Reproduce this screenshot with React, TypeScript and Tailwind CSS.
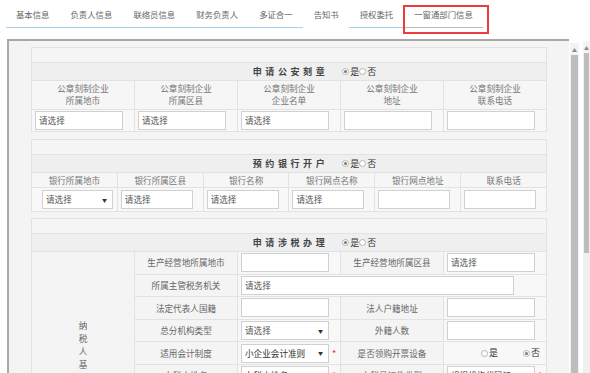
import React from "react";

const tabs = [
  { label: "基本信息", line: "border-[#a9d2f1]" },
  { label: "负责人信息", line: "border-[#a9d2f1]" },
  { label: "联络员信息", line: "border-[#a9d2f1]" },
  { label: "财务负责人", line: "border-[#a9d2f1]" },
  { label: "多证合一", line: "border-[#a9d2f1]" },
  { label: "告知书", line: "border-transparent" },
  { label: "授权委托", line: "border-[#a9d2f1]" },
  { label: "一窗通部门信息", line: "border-[#b9b9b9]" },
];

const cell = "border border-[#e2e2e2]";

function Radio({ on }: { on?: boolean }) {
  return (
    <span className="inline-flex items-center justify-center w-[7px] h-[7px] rounded-full border border-[#b4b4b4] bg-white mr-[1px]">
      {on && <span className="w-[3px] h-[3px] rounded-full bg-[#777]" />}
    </span>
  );
}

function YesNo() {
  return (
    <span className="flex items-center text-[9px] text-[#333] font-normal">
      <Radio on />是<Radio />否
    </span>
  );
}

function Star() {
  return <span className="ml-[3px] text-[9px] leading-none text-[#f22]">*</span>;
}

function Box({ text, w = "w-[88px]", select, dark }: { text?: string; w?: string; select?: boolean; dark?: boolean }) {
  return (
    <div
      className={`${w} h-[19px] bg-white border border-[#d0d0d0] flex items-center pl-[3px] pr-[5px] text-[8.6px] ${
        dark ? "text-[#333]" : "text-[#555]"
      }`}
    >
      <span className="flex-1 truncate">{text}</span>
      {select && <span className="text-[5px] text-[#333]">▼</span>}
    </div>
  );
}

function TitleRows({ cols, title }: { cols: number; title: string }) {
  return (
    <>
      <tr>
        <td colSpan={cols} className={`${cell} h-[15px] bg-[#f5f5f5]`} />
      </tr>
      <tr>
        <td colSpan={cols} className={`${cell} h-[18px] bg-[#efefef]`}>
          <div className="grid grid-cols-[1fr_auto_1fr] items-center">
            <span />
            <span className="font-bold text-[#444] tracking-[3.6px] text-[9px] pl-[3px]">{title}</span>
            <span className="pl-[14px]">
              <YesNo />
            </span>
          </div>
        </td>
      </tr>
    </>
  );
}

function Label({ children }: { children: React.ReactNode }) {
  return <td className={`${cell} h-[22.6px] text-center text-[#666] bg-[#f4f4f4]`}>{children}</td>;
}

function Val({ children, span }: { children?: React.ReactNode; span?: number }) {
  return (
    <td colSpan={span} className={`${cell} px-[3px] bg-[#f8f8f8]`}>
      {children}
    </td>
  );
}

const sealHeads = [
  ["公章刻制企业", "所属地市"],
  ["公章刻制企业", "所属区县"],
  ["公章刻制企业", "企业名单"],
  ["公章刻制企业", "地址"],
  ["公章刻制企业", "联系电话"],
];
const sealVals = ["请选择", "请选择", "请选择", "", ""];

const bankHeads = ["银行所属地市", "银行所属区县", "银行名称", "银行网点名称", "银行网点地址", "联系电话"];

function Scrollbar({ thumbEnd }: { thumbEnd?: string }) {
  return (
    <div className="flex flex-col h-full bg-[#f0f0f0]">
      <div className="h-[12px] flex items-center justify-center bg-[#f3f3f3]">
        <span className="text-[5px] text-[#8a8a8a] leading-none">▲</span>
      </div>
      <div className={`mx-[1px] bg-[#bdbdbd] ${thumbEnd ?? "flex-1"}`} />
    </div>
  );
}

export default function App() {
  return (
    <div className="relative w-[590px] h-[373px] overflow-hidden bg-white font-['Microsoft_YaHei','Noto_Sans_CJK_SC',sans-serif] text-[8.6px] text-[#666]">
      <div className="flex h-full">
        <div className="w-[583px] flex flex-col">
          {/* tabs */}
          <nav className="flex pl-[5.5px] h-[28px] shrink-0">
            {tabs.map((t) => (
              <div key={t.label} className={`px-[10.5px] h-[28px] pt-[2px] flex items-center border-b ${t.line} text-[8.4px] text-[#666]`}>
                {t.label}
              </div>
            ))}
          </nav>

          {/* frame */}
          <div className="mt-[11px] ml-[7px] mr-[4px] flex flex-1 min-h-0 border-l-2 border-[#a8a8a8]">
            <div className="flex-1 border-t-2 border-[#a8a8a8] bg-[#f4f4f4] pl-[22px] pt-[6px] overflow-hidden">
              {/* 公安刻章 */}
              <table className="w-[516px] table-fixed border-collapse">
                <tbody>
                  <TitleRows cols={5} title="申请公安刻章" />
                  <tr>
                    {sealHeads.map((h, i) => (
                      <td key={i} className={`${cell} h-[29px] text-center leading-[11.7px] text-[#777] bg-[#f6f6f6]`}>
                        {h[0]}
                        <br />
                        {h[1]}
                      </td>
                    ))}
                  </tr>
                  <tr>
                    {sealVals.map((v, i) => (
                      <td key={i} className={`${cell} h-[22px] px-[3px] bg-[#f8f8f8]`}>
                        <Box text={v} />
                      </td>
                    ))}
                  </tr>
                </tbody>
              </table>

              {/* 银行开户 */}
              <table className="mt-[7px] w-[516px] table-fixed border-collapse">
                <tbody>
                  <TitleRows cols={6} title="预约银行开户" />
                  <tr>
                    {bankHeads.map((h) => (
                      <td key={h} className={`${cell} h-[15px] text-center text-[#777] bg-[#f6f6f6]`}>
                        {h}
                      </td>
                    ))}
                  </tr>
                  <tr>
                    <td className={`${cell} h-[24px] bg-[#f8f8f8]`}>
                      <div className="ml-[10px]">
                        <Box text="请选择" w="w-[71px]" select />
                      </div>
                    </td>
                    {["请选择", "请选择", "请选择", "", ""].map((v, i) => (
                      <td key={i} className={`${cell} px-[3px] bg-[#f8f8f8]`}>
                        <Box text={v} w="w-[72px]" />
                      </td>
                    ))}
                  </tr>
                </tbody>
              </table>

              {/* 涉税办理 */}
              <table className="mt-[6px] w-[516px] table-fixed border-collapse">
                <tbody>
                  <TitleRows cols={5} title="申请涉税办理" />
                  <tr>
                    <td rowSpan={10} className={`${cell} text-center align-middle bg-[#f4f4f4] text-[#666]`}>
                      <div className="w-[9px] mx-auto leading-[13px] break-all">纳税人基本信息</div>
                    </td>
                    <Label>生产经营地所属地市</Label>
                    <Val>
                      <Box />
                    </Val>
                    <Label>生产经营地所属区县</Label>
                    <Val>
                      <Box text="请选择" />
                    </Val>
                  </tr>
                  <tr>
                    <Label>所属主管税务机关</Label>
                    <Val span={3}>
                      <Box text="请选择" w="w-[273px]" />
                    </Val>
                  </tr>
                  <tr>
                    <Label>法定代表人国籍</Label>
                    <Val>
                      <Box />
                    </Val>
                    <Label>法人户籍地址</Label>
                    <Val>
                      <Box />
                    </Val>
                  </tr>
                  <tr>
                    <Label>总分机构类型</Label>
                    <Val>
                      <Box text="请选择" select />
                    </Val>
                    <Label>外籍人数</Label>
                    <Val>
                      <Box />
                    </Val>
                  </tr>
                  <tr>
                    <Label>适用会计制度</Label>
                    <Val>
                      <div className="flex items-center">
                        <Box text="小企业会计准则" select dark />
                        <Star />
                      </div>
                    </Val>
                    <Label>是否领购开票设备</Label>
                    <Val>
                      <div className="flex items-center text-[9px] text-[#333]">
                        <span className="ml-[34px] flex items-center">
                          <Radio />是
                        </span>
                        <span className="ml-[25px] flex items-center">
                          <Radio on />否
                        </span>
                      </div>
                    </Val>
                  </tr>
                  <tr>
                    <Label>办税人姓名</Label>
                    <Val>
                      <div className="flex items-center">
                        <Box text="办税人姓名" dark />
                        <Star />
                      </div>
                    </Val>
                    <Label>办税员证件类型</Label>
                    <Val>
                      <div className="flex items-center">
                        <Box text="组织机构代码证" select dark />
                        <Star />
                      </div>
                    </Val>
                  </tr>
                  <tr>
                    <Label>办税人证件号码</Label>
                    <Val>
                      <Box />
                    </Val>
                    <Label>办税人固定电话</Label>
                    <Val>
                      <Box />
                    </Val>
                  </tr>
                  <tr>
                    <Label>办税人移动电话</Label>
                    <Val>
                      <Box />
                    </Val>
                    <Label>办税人电子邮箱</Label>
                    <Val>
                      <Box />
                    </Val>
                  </tr>
                  <tr>
                    <Label>从业人数</Label>
                    <Val>
                      <Box />
                    </Val>
                    <Label>网站网址</Label>
                    <Val>
                      <Box />
                    </Val>
                  </tr>
                  <tr>
                    <Label>核算方式</Label>
                    <Val>
                      <Box text="请选择" select />
                    </Val>
                    <Label>行业明细</Label>
                    <Val>
                      <Box text="请选择" select />
                    </Val>
                  </tr>
                </tbody>
              </table>
            </div>

            {/* inner scrollbar */}
            <div className="w-[9px] pt-[4px] bg-white ml-[1px]">
              <Scrollbar />
            </div>
          </div>
        </div>

        {/* page scrollbar */}
        <div className="w-[7px] pt-[41px]">
          <Scrollbar thumbEnd="h-[200px]" />
        </div>
      </div>

      {/* red highlight around the active tab */}
      <div className="absolute left-[403px] top-[5px] w-[86px] h-[29px] border-2 border-[#ee3b3b] pointer-events-none" />
    </div>
  );
}
